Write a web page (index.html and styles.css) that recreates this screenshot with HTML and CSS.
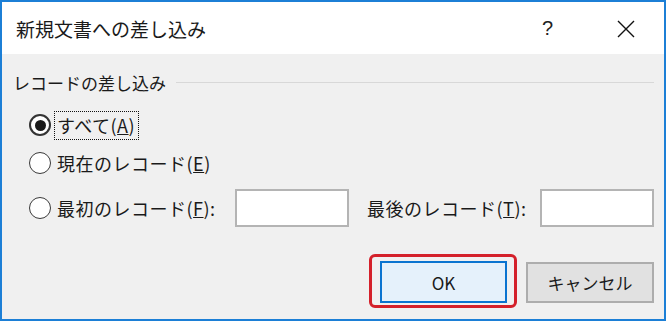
FILE: index.html
```html
<!DOCTYPE html>
<html lang="ja">
<head>
  <meta charset="UTF-8">
  <title>新規文書への差し込み</title>
  <link rel="stylesheet" href="styles.css">
</head>
<body>
  <div class="window">
    <!-- タイトルバー -->
    <div class="titlebar">
      <span class="title">新規文書への差し込み</span>
      <span class="help">?</span>
      <span class="close">
        <svg width="18" height="18" viewBox="0 0 18 18">
          <path d="M1 1 L17 17 M17 1 L1 17" stroke="#111" stroke-width="1.4" fill="none"/>
        </svg>
      </span>
    </div>

    <div class="content">
      <!-- レコードの差し込み -->
      <div class="group-head">
        <span>レコードの差し込み</span>
        <div class="group-line"></div>
      </div>

      <div class="row row-all">
        <span class="radio checked"></span>
        <span class="focus">すべて(<u>A</u>)</span>
      </div>
      <div class="row row-current">
        <span class="radio"></span>
        <span class="label">現在のレコード(<u>E</u>)</span>
      </div>
      <div class="row row-range">
        <span class="radio"></span>
        <span class="label from-label">最初のレコード(<u>F</u>):</span>
        <span class="field"></span>
        <span class="label to-label">最後のレコード(<u>T</u>):</span>
        <span class="field"></span>
      </div>

      <div class="buttons">
        <div class="mark">
          <button class="btn btn-ok">OK</button>
        </div>
        <button class="btn">キャンセル</button>
      </div>
    </div>
  </div>
</body>
</html>
```

FILE: styles.css
```css
/* 全体 */
* {
  margin: 0;
  padding: 0;
  box-sizing: border-box;
}
body {
  width: 668px;
  height: 322px;
  background: #fff;
  font-family: "Noto Sans CJK JP", "Noto Sans", sans-serif;
  color: #1a1a1a;
}
.window {
  width: 666px;
  height: 321px;
  border: 2px solid #1c7fd6;
  display: flex;
  flex-direction: column;
}
/* タイトルバー */
.titlebar {
  height: 52px;
  background: #fff;
  display: flex;
  align-items: center;
  padding-left: 14px;
}
.title {
  font-size: 19px;
  flex: 1;
}
.help {
  font-family: "Liberation Sans", sans-serif;
  font-size: 20px;
  width: 75px;
  color: #222;
}
.close {
  width: 47px;
  display: flex;
  padding-top: 2px;
}
/* 本体 */
.content {
  flex: 1;
  background: #f0f0f0;
  padding: 16px 10px 0 25px;
  font-size: 17px;
}
.group-head {
  display: flex;
  align-items: center;
  height: 24px;
  margin-left: -14px;
}
.group-line {
  flex: 1;
  border-top: 1px solid #d8d8d8;
  margin-left: 10px;
}
.row {
  display: flex;
  align-items: center;
  font-size: 18px;
}
.row-all {
  height: 30px;
  margin-top: 16px;
}
.row-current {
  height: 30px;
  margin-top: 8px;
}
.row-range {
  height: 40px;
  margin-top: 10px;
}
.radio {
  width: 22px;
  height: 22px;
  border: 1.5px solid #3a3a3a;
  border-radius: 50%;
  background: #fff;
  margin: 0 3px 0 2px;
  display: flex;
  align-items: center;
  justify-content: center;
}
.radio.checked {
  border: 2px solid #333;
}
.radio.checked::after {
  content: "";
  width: 11px;
  height: 11px;
  border-radius: 50%;
  background: #1a1a1a;
}
.focus {
  border: 1px dotted #111;
  padding: 0 3px 0 2px;
  line-height: 27px;
  letter-spacing: 0.5px;
}
.label {
  padding-left: 3px;
  letter-spacing: 0.5px;
}
.from-label {
  width: 181px;
}
.to-label {
  width: 176px;
  margin-left: 15px;
}
.field {
  width: 114px;
  height: 38px;
  background: #fff;
  border: 2px solid #b4b4b4;
}
/* ボタン */
.buttons {
  display: flex;
  justify-content: flex-end;
  align-items: flex-start;
  margin-top: 26px;
}
.mark {
  border: 3px solid #d4202a;
  border-radius: 6px;
  padding: 4px 7px 2px 8px;
  margin-right: 9px;
}
.btn {
  width: 128px;
  height: 41px;
  margin-top: 8px;
  font-family: "Noto Sans CJK JP", "Noto Sans", sans-serif;
  font-size: 17px;
  color: #1a1a1a;
  background: #e1e1e1;
  border: 2px solid #adadad;
}
.btn-ok {
  margin-top: 0;
  width: 127px;
  height: 42px;
  background: #e5f1fb;
  border: 2px solid #0a74d0;
}
```
